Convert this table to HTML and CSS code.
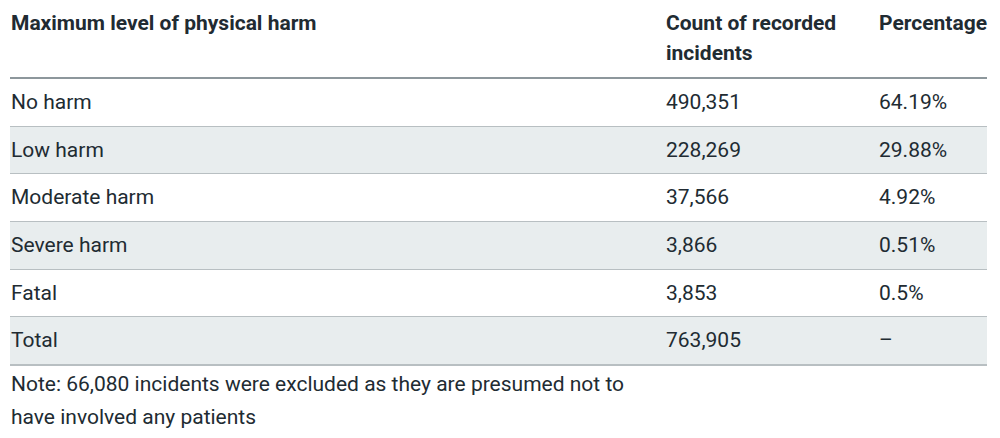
FILE: index.html
```html
<!DOCTYPE html>
<html lang="en">
<head>
<meta charset="utf-8">
<link rel="stylesheet" href="styles.css">
</head>
<body>
<div class="wrap">
  <table class="data">
    <colgroup>
      <col class="c1"><col class="c2"><col class="c3">
    </colgroup>
    <thead>
      <tr>
        <th>Maximum level of physical harm</th>
        <th>Count of recorded incidents</th>
        <th>Percentage</th>
      </tr>
    </thead>
    <tbody>
      <tr><td>No harm</td><td>490,351</td><td>64.19%</td></tr>
      <tr class="alt"><td>Low harm</td><td>228,269</td><td>29.88%</td></tr>
      <tr><td>Moderate harm</td><td>37,566</td><td>4.92%</td></tr>
      <tr class="alt"><td>Severe harm</td><td>3,866</td><td>0.51%</td></tr>
      <tr><td>Fatal</td><td>3,853</td><td>0.5%</td></tr>
      <tr class="alt"><td>Total</td><td>763,905</td><td>–</td></tr>
    </tbody>
  </table>
  <p class="note">Note: 66,080 incidents were excluded as they are presumed not to<br>have involved any patients</p>
</div>
</body>
</html>
```

FILE: styles.css
```css
html, body {
  margin: 0;
  padding: 0;
  background: #ffffff;
}
body {
  font-family: Roboto, "Liberation Sans", Arial, sans-serif;
  color: #212b32;
  font-size: 21px;
}
.wrap {
  padding: 0 13px 0 10px;
}
.data {
  width: 977px;
  border-collapse: collapse;
  table-layout: fixed;
}
.c1 { width: 656px; }
.c2 { width: 213px; }
.c3 { width: 108px; }
.data th {
  text-align: left;
  vertical-align: top;
  font-weight: 700;
  font-size: 21px;
  line-height: 30px;
  padding: 8px 0 9px 1px;
  border-bottom: 2px solid #8d979c;
}
.data td {
  font-size: 21px;
  line-height: 26.67px;
  padding: 10px 0 10px 1px;
  border-bottom: 1px solid #b8bfc2;
  white-space: nowrap;
}
.data th:nth-child(2), .data td:nth-child(2),
.data th:nth-child(3), .data td:nth-child(3) {
  padding-left: 0;
}
.data tbody tr:last-child td {
  border-bottom: 2px solid #b8bfc2;
}
.data tr.alt td {
  background: #e8edee;
}
.note {
  margin: 2px 0 0 1px;
  font-size: 21px;
  line-height: 33px;
}
```
